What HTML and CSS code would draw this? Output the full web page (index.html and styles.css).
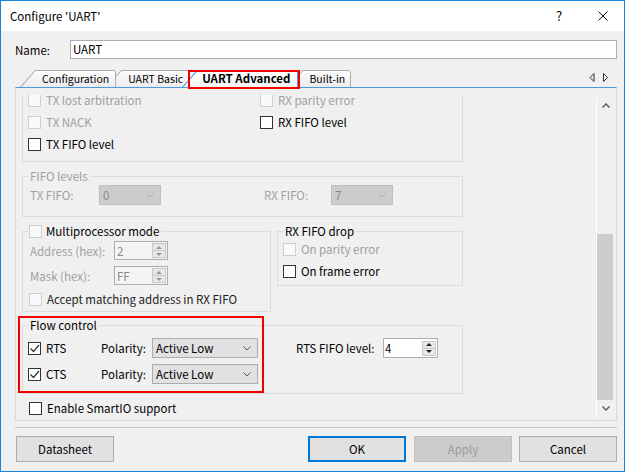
FILE: index.html
```html
<!DOCTYPE html>
<html lang="en">
<head>
  <meta charset="UTF-8">
  <title>Configure 'UART'</title>
  <link rel="stylesheet" href="styles.css">
</head>
<body>
  <div class="dialog">
    <div class="titlebar">
      <span class="title">Configure 'UART'</span>
      <span class="title-btn">?</span>
      <span class="title-btn close">
        <svg viewBox="0 0 10 10" aria-hidden="true"><path d="M0.5 0.5L9.5 9.5M9.5 0.5L0.5 9.5" stroke="#111" stroke-width="1" fill="none"/></svg>
      </span>
    </div>

    <div class="name-row">
      <span class="name-label">Name:</span>
      <div class="name-input">UART</div>
    </div>

    <div class="tabbar">
      <div class="tab t1">Configuration</div>
      <div class="tab t2">UART Basic</div>
      <div class="tab active">UART Advanced<span class="mark"></span></div>
      <div class="tab t4">Built-in</div>
      <svg class="tab-arrows" viewBox="0 0 22 17" aria-hidden="true">
        <path d="M5 3.5V11.5L1 7.5Z" stroke="#333" fill="none"/>
        <path d="M14.5 3.5V11.5L18.5 7.5Z" stroke="#333" fill="none"/>
      </svg>
    </div>

    <div class="pane">
      <div class="viewport">
        <div class="content">
          <div class="group g-events">
            <div class="chk dis"><span class="box off"></span>TX lost arbitration</div>
            <div class="chk dis"><span class="box off"></span>RX parity error</div>
            <div class="chk dis"><span class="box off"></span>TX NACK</div>
            <div class="chk"><span class="box"></span>RX FIFO level</div>
            <div class="chk"><span class="box"></span>TX FIFO level</div>
          </div>

          <fieldset class="group g-fifo">
            <legend class="dis">FIFO levels</legend>
            <div class="fifo-row">
              <span class="lbl dis">TX FIFO:</span>
              <span class="combo dis">0<svg class="chev" viewBox="0 0 8 5"><path d="M0.5 0.5L4 4L7.5 0.5"/></svg></span>
              <span></span>
              <span class="lbl dis">RX FIFO:</span>
              <span class="combo dis">7<svg class="chev" viewBox="0 0 8 5"><path d="M0.5 0.5L4 4L7.5 0.5"/></svg></span>
            </div>
          </fieldset>

          <div class="row3">
            <fieldset class="group g-mp">
              <legend><span class="legend-chk"><span class="box off"></span>Multiprocessor mode</span></legend>
              <div class="field">
                <span class="lbl dis">Address (hex):</span>
                <span class="spin dis">2<span class="spin-btns"><i class="up"></i><i class="down"></i></span></span>
              </div>
              <div class="field second">
                <span class="lbl dis">Mask (hex):</span>
                <span class="spin dis">FF<span class="spin-btns"><i class="up"></i><i class="down"></i></span></span>
              </div>
              <div class="chk accept"><span class="box off"></span>Accept matching address in RX FIFO</div>
            </fieldset>

            <fieldset class="group g-drop">
              <legend>RX FIFO drop</legend>
              <div class="chk dis"><span class="box off"></span>On parity error</div>
              <div class="chk"><span class="box"></span>On frame error</div>
            </fieldset>
          </div>

          <div class="annot">
            <fieldset class="group g-flow">
              <legend>Flow control</legend>
              <div class="flow-grid">
                <div class="chk"><span class="box"><svg viewBox="0 0 11 11"><path d="M1.5 5.5L4.5 8.5L10 2"/></svg></span>RTS</div>
                <span class="lbl">Polarity:</span>
                <span class="combo">Active Low<svg class="chev" viewBox="0 0 8 5"><path d="M0.5 0.5L4 4L7.5 0.5"/></svg></span>
                <span class="lbl rts-level">RTS FIFO level:</span>
                <span class="spin">4<span class="spin-btns"><i class="up"></i><i class="down"></i></span></span>
                <div class="chk"><span class="box"><svg viewBox="0 0 11 11"><path d="M1.5 5.5L4.5 8.5L10 2"/></svg></span>CTS</div>
                <span class="lbl">Polarity:</span>
                <span class="combo">Active Low<svg class="chev" viewBox="0 0 8 5"><path d="M0.5 0.5L4 4L7.5 0.5"/></svg></span>
              </div>
            </fieldset>
            <span class="annot-box"></span>
          </div>

          <div class="chk smartio"><span class="box"></span>Enable SmartIO support</div>
        </div>
      </div>

      <div class="scrollbar">
        <div class="sb-btn"><svg viewBox="0 0 8 5"><path d="M0.5 4.5L4 1L7.5 4.5"/></svg></div>
        <div class="sb-track"><div class="sb-thumb"></div></div>
        <div class="sb-btn"><svg viewBox="0 0 8 5"><path d="M0.5 0.5L4 4L7.5 0.5"/></svg></div>
      </div>
    </div>

    <div class="separator"></div>

    <div class="buttons">
      <div class="btn">Datasheet</div>
      <div class="btn ok">OK</div>
      <div class="btn apply">Apply</div>
      <div class="btn">Cancel</div>
    </div>
  </div>
</body>
</html>
```

FILE: styles.css
```css
/* Base */
* {
  box-sizing: border-box;
}

body {
  margin: 0;
  background: #ffffff;
  font-family: "Noto Sans CJK JP", "Noto Sans", sans-serif;
  font-size: 11.5px;
  line-height: 14px;
  color: #000000;
}

.dis {
  color: #a0a0a0;
}

/* Window frame */
.dialog {
  width: 625px;
  height: 472px;
  border: 1px solid #1883d7;
  background: #f0f0f0;
  display: flex;
  flex-direction: column;
}

.titlebar {
  height: 30px;
  flex-shrink: 0;
  background: #ffffff;
  display: flex;
  align-items: center;
  padding-left: 9px;
}

.title {
  flex: 1;
  font-size: 11.5px;
}

.title-btn {
  width: 46px;
  height: 30px;
  display: flex;
  align-items: center;
  justify-content: center;
  font-size: 13px;
}

.title-btn.close {
  width: 42px;
}

.title-btn svg {
  width: 10px;
  height: 10px;
}

/* Name */
.name-row {
  display: flex;
  align-items: center;
  height: 19px;
  margin: 9px 7px 0 14px;
}

.name-label {
  width: 55px;
}

.name-input {
  flex: 1;
  height: 19px;
  line-height: 17px;
  padding-left: 2px;
  border: 1px solid #abadb3;
  background: #ffffff;
}

/* Tabs */
.tabbar {
  display: flex;
  height: 17px;
  margin: 11px 7px 0 14px;
  padding-left: 5px;
}

.tab {
  position: relative;
  height: 17px;
  line-height: 17px;
  font-size: 10.5px;
  padding: 0 7px 0 22px;
  white-space: nowrap;
}

.tab::before,
.tab::after {
  content: "";
  position: absolute;
  z-index: -1;
}

.tab::before {
  top: 0;
  right: 0;
  bottom: 0;
  left: 0;
  background: #acacac;
  clip-path: polygon(0 100%, 15px 0, calc(100% - 2px) 0, 100% 2px, 100% 100%);
}

.tab::after {
  top: 1px;
  right: 1px;
  bottom: 0;
  left: 0;
  background: linear-gradient(#fdfdfd, #ececec);
  clip-path: polygon(1.4px 100%, 15.4px 0, calc(100% - 1px) 0, 100% 1px, 100% 100%);
}

.t1 {
  z-index: 4;
}

.t2 {
  z-index: 3;
  margin-left: -10px;
}

.tab.active {
  z-index: 5;
  margin-left: -8px;
  padding: 0 8px 0 20px;
  font-size: 11.5px;
  font-weight: bold;
}

.tab.active::before {
  background: #4a98e2;
}

.tab.active::after {
  background: linear-gradient(#ffffff, #f4f4f4);
}

.t4 {
  z-index: 2;
  margin-left: -11px;
  padding-right: 6px;
}

.mark {
  position: absolute;
  left: 6px;
  top: 0;
  width: 112px;
  height: 19px;
  border: 2px solid #f20000;
}

.tab-arrows {
  margin-left: auto;
  margin-right: 6px;
  width: 22px;
  height: 17px;
}

/* Tab pane */
.pane {
  display: flex;
  height: 334px;
  flex-shrink: 0;
  margin: 0 7px 0 14px;
  padding: 7px 2px 1px 0;
  border: 1px solid #d9d9d9;
  border-top-color: #4a98e2;
}

.viewport {
  flex: 1;
  overflow: hidden;
}

.content {
  padding-left: 6px;
}

.scrollbar {
  width: 18px;
  margin: 2px 0 2px;
  border-left: 1px solid #ffffff;
  display: flex;
  flex-direction: column;
}

.sb-btn {
  height: 17px;
  display: flex;
  align-items: center;
  justify-content: center;
}

.sb-btn svg {
  width: 8px;
  height: 5px;
  fill: none;
  stroke: #606060;
  stroke-width: 1.5;
}

.sb-track {
  flex: 1;
  display: flex;
  flex-direction: column;
  justify-content: flex-end;
}

.sb-thumb {
  height: 166px;
  margin-right: 1px;
  background: #cdcdcd;
}

/* Group boxes */
.group {
  width: 441px;
  min-width: 0;
  margin: 0;
  padding: 0 0 0 5px;
  border: 1px solid #dcdcdc;
}

.group legend {
  padding: 0 2px;
  height: 14px;
  line-height: 14px;
}

.g-events {
  margin-top: -7px;
  padding-bottom: 6px;
  display: grid;
  grid-template-columns: 232px 1fr;
  grid-auto-rows: 22px;
}

.g-fifo {
  margin-top: 7px;
  padding: 2px 0 11px 5px;
}

.fifo-row {
  display: grid;
  grid-template-columns: 71px 62px 101px 69px 62px;
  height: 20px;
  align-items: center;
}

.row3 {
  display: flex;
  align-items: flex-start;
  gap: 6px;
  margin-top: 7px;
}

.g-mp {
  width: 249px;
  padding: 2px 0 1px 5px;
}

.g-mp legend {
  padding-left: 1px;
}

.legend-chk {
  display: flex;
  align-items: center;
  height: 14px;
}

.legend-chk .box {
  margin-right: 4px;
}

.field {
  display: grid;
  grid-template-columns: 86px 54px;
  height: 21px;
  align-items: center;
}

.field.second {
  margin-top: 4px;
}

.chk.accept {
  margin: 2px 0 0 1px;
  color: #222222;
}

.g-drop {
  width: 186px;
  padding: 0 0 3px 5px;
}

.annot {
  position: relative;
  margin-top: 6px;
}

.annot-box {
  position: absolute;
  left: -4px;
  top: -2px;
  width: 246px;
  height: 77px;
  border: 2px solid #f20000;
}

.g-flow {
  padding: 6px 0 9px 5px;
}

.flow-grid {
  display: grid;
  grid-template-columns: 71px 53px 106px 125px 55px;
  grid-auto-rows: 20px;
  row-gap: 6px;
  align-items: center;
}

.flow-grid .chk {
  height: 20px;
}

.flow-grid .rts-level {
  padding-left: 38px;
}

.smartio {
  margin: 3px 0 0 7px;
}

/* Controls */
.lbl {
  padding-left: 2px;
  white-space: nowrap;
}

.chk {
  display: flex;
  align-items: center;
  height: 22px;
  white-space: nowrap;
}

.box {
  width: 13px;
  height: 13px;
  flex-shrink: 0;
  margin-right: 5px;
  border: 1px solid #333333;
  background: #ffffff;
}

.box.off {
  border-color: #cfcfcf;
  background: #f9f9f9;
}

.box svg {
  display: block;
  width: 11px;
  height: 11px;
  fill: none;
  stroke: #333333;
  stroke-width: 1.2;
}

.combo {
  height: 20px;
  display: flex;
  align-items: center;
  justify-content: space-between;
  padding: 0 6px 0 3px;
  border: 1px solid #adadad;
  background: #e1e1e1;
}

.combo.dis {
  border-color: #bfbfbf;
  background: #cccccc;
  color: #8a8a8a;
}

.chev {
  width: 8px;
  height: 5px;
  fill: none;
  stroke: #555555;
  stroke-width: 1;
}

.combo.dis .chev {
  stroke: #a8a8a8;
}

.spin {
  height: 19px;
  display: flex;
  align-items: center;
  padding-left: 2px;
  border: 1px solid #adadad;
  background: #ffffff;
}

.flow-grid .spin {
  height: 20px;
  padding-left: 1px;
}

.spin.dis {
  background: #f4f4f4;
  color: #8a8a8a;
}

.spin-btns {
  margin-left: auto;
  margin-right: 1px;
  width: 14px;
  height: 15px;
  display: flex;
  flex-direction: column;
  border: 1px solid #c8c8c8;
  background: #e8e8e8;
}

.spin-btns i {
  flex: 1;
  display: flex;
  align-items: center;
  justify-content: center;
}

.spin-btns i + i {
  border-top: 1px solid #c8c8c8;
}

.spin-btns i::after {
  content: "";
  border-left: 3px solid transparent;
  border-right: 3px solid transparent;
}

.spin-btns .up::after {
  border-bottom: 3px solid #222222;
}

.spin-btns .down::after {
  border-top: 3px solid #222222;
}

.spin.dis .spin-btns .up::after {
  border-bottom-color: #999999;
}

.spin.dis .spin-btns .down::after {
  border-top-color: #999999;
}

/* Bottom buttons */
.separator {
  height: 0;
  margin: 6px 7px 0 14px;
  border-top: 1px solid #c6c6c6;
}

.buttons {
  display: flex;
  margin: 8px 7px 0 15px;
}

.btn {
  width: 98px;
  height: 26px;
  display: flex;
  align-items: center;
  justify-content: center;
  border: 1px solid #adadad;
  background: #e1e1e1;
}

.btn.ok {
  margin-left: auto;
  border: 2px solid #0078d7;
}

.btn.apply {
  margin: 0 7px 0 8px;
  border-color: #bfbfbf;
  background: #cccccc;
  color: #9a9a9a;
}
```
